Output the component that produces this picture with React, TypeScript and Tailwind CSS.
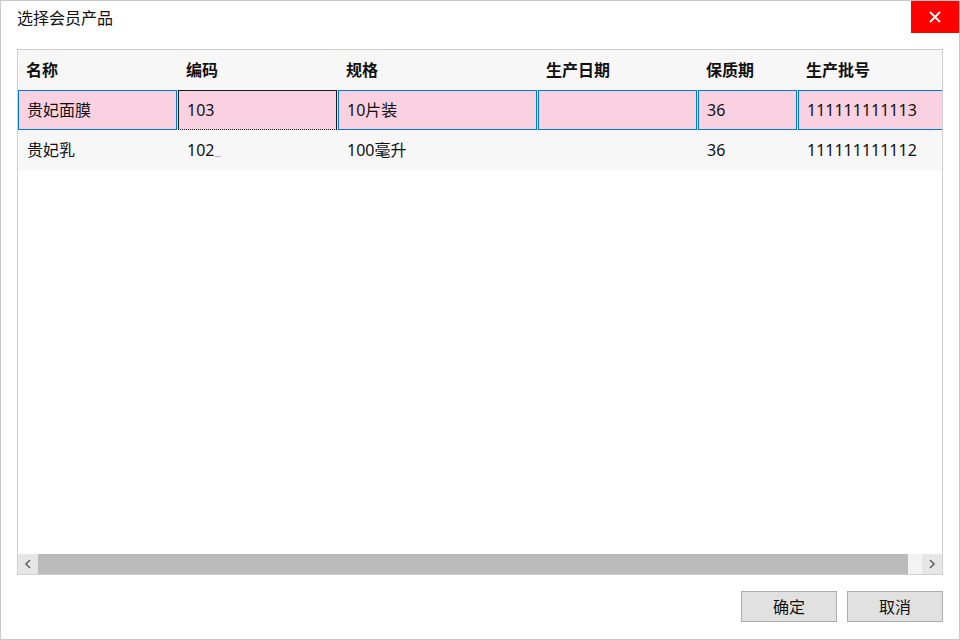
import React from "react";

const font = { fontFamily: '"Noto Sans", "Noto Sans CJK SC", sans-serif' };

const cols = [
  { t: "名称", w: "w-[160px]", iw: "w-[159px]" },
  { t: "编码", w: "w-[160px]", iw: "w-[159px]" },
  { t: "规格", w: "w-[200px]", iw: "w-[199px]" },
  { t: "生产日期", w: "w-[160px]", iw: "w-[159px]" },
  { t: "保质期", w: "w-[100px]", iw: "w-[99px]" },
  { t: "生产批号", w: "w-[160px]", iw: "w-[159px]" },
];

export default function App() {
  const row1 = ["贵妃面膜", "103", "10片装", "", "36", "111111111113"];
  const row2 = ["贵妃乳", "102", "100毫升", "", "36", "111111111112"];
  return (
    <div
      className="w-[960px] h-[640px] bg-white border border-[#c9c9c9] flex flex-col text-[#111]"
      style={font}
    >
      <div className="h-[32px] flex items-center justify-between shrink-0">
        <div className="pl-[16px] text-[16px] leading-none pt-[1px]">选择会员产品</div>
        <div className="w-[48px] h-[32px] bg-[#ff0000] flex items-center justify-center">
          <svg width="12" height="12" viewBox="0 0 12 12">
            <path d="M1 1L11 11M11 1L1 11" stroke="white" strokeWidth="1.8" />
          </svg>
        </div>
      </div>
      <div className="px-[16px] pt-[16px]">
        <div className="h-[526px] border border-[#cfcfcf] flex flex-col overflow-hidden">
          <div className="flex-1 overflow-hidden">
            <div className="flex h-[40px] bg-[#f7f7f7] text-[16px] font-bold items-center">
              {cols.map((c) => (
                <div key={c.t} className={`${c.w} shrink-0 pl-[8px]`}>
                  {c.t}
                </div>
              ))}
            </div>
            <div className="flex h-[40px] bg-[#fad1e1] text-[16px]">
              {row1.map((v, i) => (
                <div key={i} className={`${cols[i].w} shrink-0 h-[40px]`}>
                  <div
                    className={`${cols[i].iw} h-[40px] flex items-center pl-[8px] border ${
                      i === 1 ? "border-[#1a1a1a]" : "border-[#0078d7]"
                    }`}
                    style={i === 1 ? { borderBottomStyle: "dotted" } : undefined}
                  >
                    {v}
                  </div>
                </div>
              ))}
            </div>
            <div className="flex h-[40px] bg-[#f7f7f7] text-[16px]">
              {row2.map((v, i) => (
                <div key={i} className={`${cols[i].w} shrink-0 h-[40px] flex items-center pl-[9px]`}>
                  {v}
                  {i === 1 && <span className="inline-block w-[6px] h-[1px] bg-[#bbbbbb] mt-[12px] ml-[1px]" />}
                </div>
              ))}
            </div>
          </div>
          <div className="h-[20px] flex shrink-0">
            <div className="w-[20px] bg-[#e6e6e6] flex items-center justify-center">
              <svg width="8" height="10" viewBox="0 0 8 10">
                <path d="M6 1L2 5L6 9" stroke="#606060" strokeWidth="1.5" fill="none" />
              </svg>
            </div>
            <div className="flex-1 bg-[#bbbbbb]" />
            <div className="w-[14px] bg-[#f3f3f3]" />
            <div className="w-[20px] bg-[#e6e6e6] flex items-center justify-center">
              <svg width="8" height="10" viewBox="0 0 8 10">
                <path d="M2 1L6 5L2 9" stroke="#606060" strokeWidth="1.5" fill="none" />
              </svg>
            </div>
          </div>
        </div>
      </div>
      <div className="flex justify-end gap-[10px] px-[16px] pt-[16px]">
        <button className="w-[96px] h-[31px] bg-[#e1e1e1] border border-[#adadad] text-[16px]">确定</button>
        <button className="w-[96px] h-[31px] bg-[#e1e1e1] border border-[#adadad] text-[16px]">取消</button>
      </div>
    </div>
  );
}
